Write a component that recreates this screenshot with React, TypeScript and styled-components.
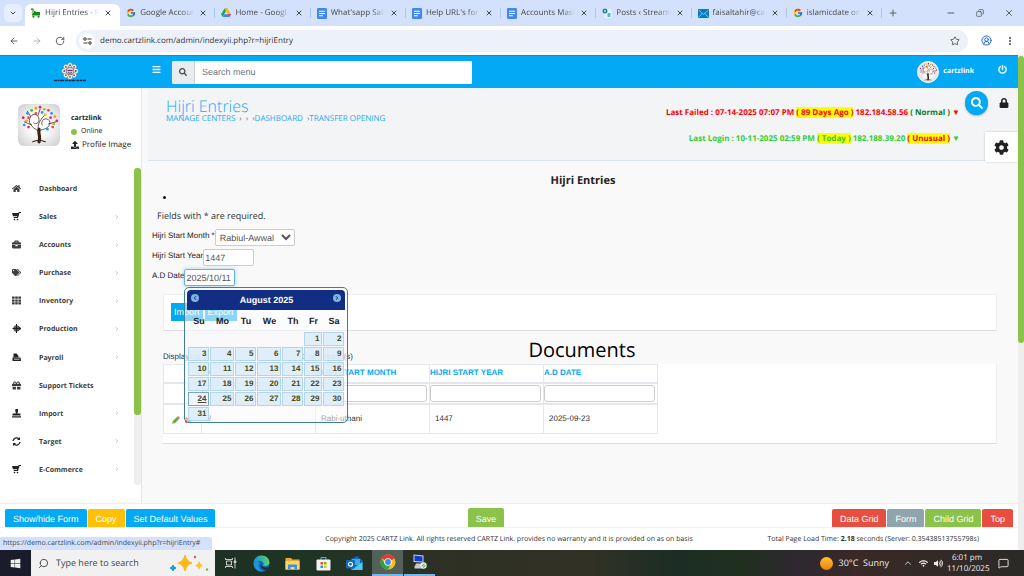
import React from "react";
import styled, { createGlobalStyle, css } from "styled-components";
import {
  FaBars, FaSearch, FaPowerOff, FaHome, FaBriefcase, FaTags, FaTh, FaGift,
  FaLock, FaCog, FaUpload, FaWindows, FaWifi, FaVolumeUp,
} from "react-icons/fa";
import { FcGoogle } from "react-icons/fc";
import {
  ArrowLeft, ArrowRight, RotateCw, Star, CircleUserRound, EllipsisVertical,
  ChevronDown, ChevronRight, ChevronUp, X, Plus, Minus, Copy, Search,
  MessageSquare,
} from "lucide-react";

const sans = '"Open Sans", "Noto Sans", sans-serif';
const arial = '"Liberation Sans", Arial, sans-serif';
const blue = "#03a9f4";
const green = "#8bc34a";

const Global = createGlobalStyle`
  *, *::before, *::after { box-sizing: border-box; }
  html, body { margin: 0; height: 100%; }
  body { font-family: ${sans}; font-size: 8px; line-height: 12px; color: #333; overflow: hidden; text-rendering: geometricPrecision; }
  a { color: inherit; text-decoration: none; }
  button, input, select { font: inherit; margin: 0; text-rendering: inherit; }
  button { border: 0; padding: 0; background: none; color: inherit; }
  h1, h2, h3, p, ul { margin: 0; padding: 0; font-weight: normal; }
  svg { display: block; flex: none; }
`;

const Screen = styled.div`
  height: 100vh;
  display: flex;
  flex-direction: column;
  position: relative;
`;

/* ---------- browser chrome ---------- */

const TabStrip = styled.div`
  flex: none;
  height: 26px;
  display: flex;
  align-items: stretch;
  background: #d3e1fd;
  color: #474747;
`;
const TabMenu = styled.button`
  width: 18px;
  height: 18px;
  margin: 4px 3px 4px 4px;
  border-radius: 5px;
  background: #e7effe;
  display: grid;
  place-items: center;
`;
const Tabs = styled.div`
  flex: 1;
  min-width: 0;
  display: grid;
  grid-template-columns: repeat(9, 1fr);
`;
const Tab = styled.div<{ $active?: boolean }>`
  display: flex;
  align-items: center;
  gap: 4px;
  padding: 0 7px 0 6px;
  min-width: 0;
  margin-top: ${(p) => (p.$active ? 4 : 0)}px;
  padding-bottom: ${(p) => (p.$active ? 4 : 0)}px;
  background: ${(p) => (p.$active ? "#fff" : "none")};
  border-radius: 6px 6px 0 0;
  position: relative;
  &:not(:first-child)::after {
    content: "";
    position: absolute;
    right: 0;
    top: 8px;
    height: 10px;
    width: 1px;
    background: #a8c7fa;
  }
`;
const TabLabel = styled.span`
  flex: 1;
  overflow: hidden;
  white-space: nowrap;
  mask-image: linear-gradient(90deg, #000 75%, transparent 100%);
`;
const TabClose = styled.button`
  width: 10px;
  height: 10px;
  display: grid;
  place-items: center;
`;
const WindowButtons = styled.div`
  flex: none;
  width: 142px;
  display: flex;
  align-items: center;
  justify-content: space-between;
  padding: 0 10px 0 6px;
`;
const WinGroup = styled.div`
  display: flex;
  gap: 20px;
  align-items: center;
`;
const AddressRow = styled.div`
  flex: none;
  height: 29px;
  display: flex;
  align-items: center;
  gap: 13px;
  padding: 0 9px;
  background: #fff;
  color: #474747;
`;
const Address = styled.label`
  flex: 1;
  height: 22px;
  border-radius: 11px;
  background: #ecf1fa;
  display: flex;
  align-items: center;
  padding: 0 8px 0 3px;
  margin-left: -2px;
`;
const SiteInfo = styled.span`
  width: 16px;
  height: 16px;
  border-radius: 8px;
  background: #fff;
  display: grid;
  place-items: center;
`;
const AddressInput = styled.input`
  flex: 1;
  border: 0;
  background: none;
  padding: 0 5px;
  font-size: 8px;
  color: #333;
  outline: 0;
`;

/* ---------- site shell ---------- */

const Viewport = styled.div`
  flex: 1;
  min-height: 0;
  display: flex;
`;
const PageScroll = styled.div`
  flex: none;
  width: 6px;
  background: #eee;
  padding-top: 1px;
  &::before {
    content: "";
    display: block;
    height: 58%;
    border-radius: 3px;
    background: ${green};
  }
`;
const Site = styled.div`
  flex: 1;
  min-width: 0;
  display: flex;
  flex-direction: column;
`;
const Header = styled.header`
  flex: none;
  height: 33px;
  display: flex;
  align-items: center;
  background: ${blue};
  border-top: 1px solid #2b86b5;
  color: #fff;
`;
const Logo = styled.a`
  width: 140px;
  display: flex;
  justify-content: center;
`;
const MenuToggle = styled.button`
  width: 32px;
  padding: 0 0 6px 12px;
`;
const MenuSearch = styled.label`
  width: 300px;
  height: 23px;
  display: flex;
  background: #fff;
  border-radius: 2px;
  overflow: hidden;
  color: #444;
`;
const SearchAddon = styled.span`
  width: 23px;
  background: #e9ecef;
  border-right: 1px solid #ccd2d6;
  display: grid;
  place-items: center;
`;
const MenuSearchInput = styled.input`
  flex: 1;
  border: 0;
  padding: 0 7px;
  font: 9px ${arial};
  &::placeholder { color: #6c757d; opacity: 1; }
`;
const HeaderUser = styled.div`
  margin-left: auto;
  display: flex;
  align-items: center;
  gap: 4px;
  padding-right: 11px;
  font-size: 7px;
  font-weight: 700;
`;
const Avatar = styled.span<{ $size: number; $round?: boolean }>`
  display: block;
  width: ${(p) => p.$size}px;
  height: ${(p) => p.$size}px;
  border-radius: ${(p) => (p.$round ? "50%" : "6px")};
  overflow: hidden;
  background: radial-gradient(#fff 30%, #ccc);
  ${(p) => p.$round && css`border: 1px solid #fff;`}
`;
const Power = styled.button`
  margin: 0 0 6px 20px;
`;
const Body = styled.div`
  flex: 1;
  min-height: 0;
  display: flex;
`;

/* ---------- sidebar ---------- */

const Sidebar = styled.aside`
  flex: none;
  width: 142px;
  display: flex;
  flex-direction: column;
  padding-bottom: 18px;
  border-right: 1px solid #e6e6e6;
  background: #fff;
`;
const Profile = styled.div`
  flex: none;
  height: 80px;
  display: flex;
  gap: 11px;
  padding: 16px 0 0 18px;
`;
const ProfileText = styled.div`
  display: flex;
  flex-direction: column;
  padding-top: 8px;
  line-height: 13px;
  color: #222;
`;
const ProfileLine = styled.span`
  display: flex;
  align-items: center;
  gap: 3px;
  white-space: nowrap;
`;
const Online = styled(ProfileLine)`
  font-size: 7px;
  gap: 4px;
  &::before {
    content: "";
    width: 6px;
    height: 6px;
    border-radius: 3px;
    background: ${green};
  }
`;
const UserName = styled.b`
  font-size: 7px;
`;
const NavArea = styled.div`
  flex: 1;
  min-height: 0;
  display: flex;
`;
const Nav = styled.nav`
  flex: 1;
  padding-top: 8px;
  display: grid;
  grid-auto-rows: 1fr;
`;
const NavItem = styled.a`
  display: grid;
  grid-template-columns: 27px 1fr 8px;
  align-items: center;
  padding: 0 12px;
  font-size: 7px;
  font-weight: 700;
  color: #3d3d3d;
  svg { margin-bottom: 3px; }
`;
const NavScroll = styled.div`
  width: 7px;
  border-radius: 3px;
  background: #eee;
  &::before {
    content: "";
    display: block;
    height: 78%;
    border-radius: 3px;
    background: ${green};
  }
`;

/* ---------- main ---------- */

const Main = styled.main`
  flex: 1;
  min-width: 0;
  background: #f9f9f9;
  overflow: hidden;
`;
const PageHead = styled.div`
  height: 73px;
  margin-left: 6px;
  padding: 9px 0 0 18px;
  display: flex;
  background: #f3f4f6;
  border-bottom: 1px solid #dde6ed;
`;
const HeadTitles = styled.div`
  flex: 1;
`;
const PageTitle = styled.h1`
  font-size: 16px;
  line-height: 18px;
  font-weight: 300;
  color: #27a9f1;
`;
const Crumbs = styled.nav`
  display: flex;
  align-items: center;
  line-height: 8px;
  color: #27a9f1;
`;
const Sep = styled.span`
  color: #777;
  margin-left: 4px;
`;
const Logins = styled.div`
  padding: 10px 5px 0 0;
  display: flex;
  flex-direction: column;
  align-items: flex-end;
  gap: 14px;
  font-size: 8px;
  white-space: nowrap;
`;
const LoginLine = styled.p<{ $color: string }>`
  font-weight: 700;
  color: ${(p) => p.$color};
`;
const Mark = styled.mark<{ $color: string; $plain?: boolean }>`
  color: ${(p) => p.$color};
  background: ${(p) => (p.$plain ? "none" : "#ff0")};
`;
const HeadTools = styled.div`
  width: 53px;
  margin-top: -9px;
  display: flex;
  flex-direction: column;
  align-items: flex-end;
  justify-content: space-between;
`;
const ToolRow = styled.div`
  width: 53px;
  display: flex;
  align-items: center;
  justify-content: space-between;
  padding: 3px 9px 0 0;
`;
const RoundSearch = styled.button`
  width: 23px;
  height: 24px;
  border-radius: 12px;
  background: ${blue};
  color: #fff;
  display: grid;
  place-items: center;
  box-shadow: 0 1px 2px #0004;
`;
const Gear = styled.button`
  width: 33px;
  height: 30px;
  margin-bottom: -2px;
  background: #fff;
  color: #222;
  display: grid;
  place-items: center;
  box-shadow: 0 0 2px #0003;
`;
const Content = styled.div`
  padding: 0 21px;
`;
const FormTitle = styled.h2`
  padding: 13px 0 2px 6px;
  font-size: 11px;
  line-height: 14px;
  font-weight: 700;
  text-align: center;
  color: #222;
`;
const Errors = styled.ul`
  height: 14px;
  display: flex;
  align-items: center;
  &::before {
    content: "";
    width: 3px;
    height: 3px;
    border-radius: 2px;
    background: #111;
  }
`;
const Form = styled.form`
  margin-left: -11px;
  font-family: ${arial};
`;
const Hint = styled.p`
  margin: 4px 0 5px 5px;
  font: 9px/16px ${sans};
`;
const Field = styled.div`
  display: flex;
  align-items: flex-start;
  height: 20px;
  line-height: 14px;
  color: #222;
  &:last-child { height: 25px; }
`;
const fieldBox = css`
  height: 17px;
  border: 1px solid #ccc;
  border-radius: 2px;
  background: #fff;
  color: #555;
  font: 9px ${arial};
  padding: 0 1px;
`;
const Select = styled.select`
  ${fieldBox}
  width: 80px;
  padding: 0;
`;
const Text = styled.input<{ $focus?: boolean }>`
  ${fieldBox}
  width: 51px;
  ${(p) => p.$focus && css`border-color: #66afe9; box-shadow: 0 0 4px #66afe999; outline: 0;`}
`;
const DateWrap = styled.div`
  position: relative;
  line-height: 0;
`;

/* ---------- date picker ---------- */

const Picker = styled.div`
  position: absolute;
  z-index: 2;
  top: 18px;
  left: 0;
  width: 164px;
  height: 136px;
  padding: 2px;
  border: 1px solid #3f7f86;
  border-radius: 5px;
  background: #fafaff8c;
  font-family: ${arial};
`;
const PickerHead = styled.div`
  height: 20px;
  display: flex;
  justify-content: space-between;
  padding: 4px 4px 0;
  border-radius: 4px 4px 0 0;
  background: #112e84;
  color: #fff;
`;
const PickerTitle = styled.strong`
  font-size: 9px;
  line-height: 13px;
`;
const PickerArrow = styled.button<{ $back?: boolean }>`
  width: 8px;
  height: 8px;
  border-radius: 4px;
  background: #7fb5dd;
  color: #112e84;
  display: grid;
  place-items: center;
  transform: ${(p) => (p.$back ? "rotate(180deg)" : "none")};
`;
const Days = styled.table`
  width: 100%;
  border-collapse: separate;
  border-spacing: 1px;
  table-layout: fixed;
  line-height: 11px;
  th { height: 20px; padding: 0; text-align: center; color: #222; font-size: 9px; }
  td { padding: 0; height: 14px; }
`;
const DayCol = styled.col<{ $w: number }>`
  width: ${(p) => p.$w}%;
`;
const Day = styled.button<{ $today?: boolean }>`
  display: block;
  width: 100%;
  height: 14px;
  padding-right: 2px;
  border: 1px solid ${(p) => (p.$today ? "#7ba5cc" : "#b3d5ee")};
  background: ${(p) => (p.$today ? "#eef5fbe6" : "#d9ecf9e0")};
  text-align: right;
  font-weight: 700;
  line-height: 12px;
  color: ${(p) => (p.$today ? "#444" : "#4a4a10")};
  text-decoration: ${(p) => (p.$today ? "underline" : "none")};
`;

/* ---------- grid ---------- */

const Panel = styled.section`
  background: #fff;
  border: 1px solid #eee;
  border-bottom-color: #ddd;
`;
const ImportPanel = styled(Panel)`
  height: 37px;
  padding: 8px 7px;
  display: flex;
  gap: 2px;
`;
const Btn = styled.button<{ $bg?: string }>`
  height: 18px;
  padding: 2px 8px 0;
  border-radius: 2px 2px 0 0;
  background: ${(p) => p.$bg ?? blue};
  color: #fff;
  font: 9px ${arial};
  white-space: nowrap;
`;
const SmallBtn = styled(Btn)`
  padding: 0 3px;
  border-radius: 0;
`;
const GridHead = styled.div`
  height: 33px;
  display: grid;
  grid-template-columns: 1fr auto 1fr;
`;
const Summary = styled.p`
  width: 190px;
  align-self: end;
  margin-bottom: 6px;
  display: flex;
  justify-content: space-between;
  font-family: ${arial};
`;
const GridTitle = styled.h2`
  font-size: 20px;
  line-height: 38px;
  color: #000;
  padding-left: 4px;
`;
const GridPanel = styled(Panel)`
  padding-bottom: 9px;
  border-width: 0 1px 1px 0;
`;
const Data = styled.table`
  width: 495px;
  table-layout: fixed;
  border-collapse: collapse;
  font-family: ${arial};
  th, td { border: 1px solid #e5e8ec; padding: 0; text-align: left; }
  th { height: 18px; color: ${blue}; }
  thead tr { border-bottom: 2px solid #e3e7eb; }
  tbody td { height: 30px; padding-left: 5px; }
`;
const ToolCol = styled.col`
  width: 38px;
`;
const Filter = styled.input`
  display: block;
  width: calc(100% - 2px);
  height: 17px;
  margin: 1px 0;
  border: 1px solid #ccc;
  border-radius: 3px;
`;
const RowTools = styled.span`
  display: flex;
  gap: 4px;
  padding: 4px 0 0 2px;
`;

/* ---------- bottom bars ---------- */

const ActionBar = styled.div`
  flex: none;
  height: 24px;
  display: grid;
  grid-template-columns: 1fr auto 1fr;
  align-items: end;
  padding: 0 5px;
  border-top: 1px solid #eee;
  background: #fff;
`;
const BtnGroup = styled.div<{ $end?: boolean }>`
  display: flex;
  gap: 1px;
  justify-content: ${(p) => (p.$end ? "flex-end" : "flex-start")};
`;
const SaveBtn = styled(Btn)`
  height: 19px;
  margin-right: 46px;
`;
const Footer = styled.footer`
  flex: none;
  height: 23px;
  display: grid;
  grid-template-columns: 1fr auto 1fr;
  padding-top: 6px;
  border-top: 1px solid #f0f0f0;
  background: #fff;
  font-size: 7px;
`;
const Copyright = styled.p`
  grid-column: 2;
`;
const LoadTime = styled.p`
  text-align: right;
  padding-right: 39px;
`;
const LinkBubble = styled.div`
  position: absolute;
  z-index: 3;
  left: 0;
  bottom: 26px;
  height: 13px;
  min-width: 212px;
  padding: 1px 3px 0;
  border-radius: 0 3px 0 0;
  background: #d3e1fd;
  color: #474747;
  font-size: 7px;
  white-space: nowrap;
`;
const Taskbar = styled.div`
  flex: none;
  height: 26px;
  display: flex;
  background: linear-gradient(90deg, #1b2b22 0%, #1f3425 30%, #2f3024 45%, #313124 58%, #1b2d25 66%, #20301f 72%, #2e2830 78%, #3a2926 84%, #2b2a26 100%);
  color: #eee;
`;
const Start = styled.button`
  width: 31px;
  background: #1b1c2b;
  display: grid;
  place-items: center;
`;
const TaskSearch = styled.label`
  width: 184px;
  padding: 0 6px 0 7px;
  display: flex;
  align-items: center;
  gap: 7px;
  background: #f1f1f1;
  color: #444;
`;
const TaskInput = styled.input`
  flex: 1;
  width: 100px;
  border: 0;
  padding: 0;
  background: none;
  font-size: 9px;
  &::placeholder { color: #444; opacity: 1; }
`;
const TaskApp = styled.button<{ $state?: "open" | "active" }>`
  width: 31px;
  display: grid;
  place-items: center;
  margin: ${(p) => (p.$state === "active" ? "0 1px 0 2px" : "0")};
  background: ${(p) => (p.$state === "active" ? "#56605a" : "none")};
  border-bottom: ${(p) => (p.$state ? "2px solid #76b9ed" : "0")};
`;
const Tray = styled.div`
  margin-left: auto;
  display: flex;
  align-items: center;
  gap: 6px;
  padding-right: 15px;
  font-size: 9px;
`;
const Sun = styled.span`
  width: 13px;
  height: 13px;
  border-radius: 7px;
  background: linear-gradient(#fdc52b, #f07b12);
`;
const Weather = styled.span`
  margin-right: 8px;
  white-space: pre;
`;
const Clock = styled.time`
  width: 40px;
  text-align: center;
  font-size: 8px;
  line-height: 11px;
  margin: 0 5px 0 -2px;
`;

/* ---------- drawings ---------- */

const Tree = () => (
  <svg viewBox="0 0 40 40" width="100%" height="100%">
    <g stroke="#3a2016" fill="none" strokeLinecap="round">
      <path d="M20 36C22 31 19 29 20 24" strokeWidth="3" />
      <path d="M20 26C12 22 9 17 12 12C15 8 20 10 20 15C20 18 17 20 15 18M21 25C27 24 32 21 30 16C27 12 21 15 23 20M20 25C17 20 22 14 26 10M13 20L6 17M12 12L9 7M29 19L36 17M19 11L21 5" strokeWidth=".7" />
      <path d="M14 36Q20 33 26 36" strokeWidth="1" />
    </g>
    {[
      [5, 13, "#e91e63"], [9, 9, "#2196f3"], [13, 6, "#4caf50"], [17, 4, "#ff9800"], [21, 3, "#e91e63"],
      [25, 5, "#8bc34a"], [29, 6, "#f44336"], [32, 9, "#2196f3"], [35, 12, "#ff9800"], [37, 16, "#e91e63"],
      [34, 19, "#8bc34a"], [31, 13, "#e91e63"], [26, 10, "#ffc107"], [17, 9, "#f44336"], [8, 16, "#ff9800"],
      [6, 20, "#2196f3"], [23, 8, "#2196f3"], [33, 22, "#f44336"], [10, 13, "#f44336"], [28, 24, "#2196f3"], [10, 22, "#e91e63"],
    ].map(([x, y, c], i) => <circle key={i} cx={x} cy={y} r="1.3" fill={c as string} />)}
  </svg>
);
const LogoMark = () => (
  <svg width="34" height="20" viewBox="0 0 34 20">
    {Array.from({ length: 8 }, (_, i) => (
      <g key={i} transform={`rotate(${i * 45} 17 9)`}>
        <circle cx="17" cy="3.2" r="2.6" fill="#f2faf6" stroke="#2d6660" strokeWidth=".4" />
        <circle cx="17" cy="3.2" r=".9" fill="#8b2d68" />
      </g>
    ))}
    <circle cx="17" cy="9" r="4" fill="#ccc" stroke="#555" strokeWidth=".6" />
    <path d="M14.5 8.5h5M15 10.5q2 1.8 4 0" stroke="#7a2a5a" fill="none" />
    <path d="M1 18.5h32" stroke="#142a55" strokeWidth="1.6" strokeDasharray="3 .6 2 .6 4 1" />
  </svg>
);
const GreenCart = () => (
  <svg width="10" height="10" viewBox="0 0 20 20">
    <path d="M0 1h5v9h13v5H2v-3h1V4H0z" fill="#138a13" />
    <path d="M6 6h3v2h9v2H6z" fill="#138a13" />
    <circle cx="5" cy="17.5" r="2.2" fill="#138a13" /><circle cx="15" cy="17.5" r="2.2" fill="#138a13" />
  </svg>
);
const Drive = () => (
  <svg width="10" height="10" viewBox="0 0 20 18">
    <path d="M7 0h6L6.500 11.500 3.500 17 0 11.500z" fill="#1fa463" />
    <path d="M7 0h6l7 11.500h-6.500z" fill="#ffba00" />
    <path d="M6.500 11.500H20L17 17H3.500z" fill="#4285f4" />
    <path d="M13.500 11.500H20L17 17z" fill="#ea4335" />
  </svg>
);
const Doc = () => (
  <svg width="10" height="11" viewBox="0 0 20 22">
    <rect width="20" height="22" rx="2.500" fill="#4285f4" />
    <path d="M4 6.500h12M4 11h12M4 15.500h8" stroke="#fff" strokeWidth="2" />
  </svg>
);
const Post = () => (
  <svg width="10" height="10" viewBox="0 0 20 20">
    <path d="M3 1h12l5 5v14H5z" fill="#e4f4fa" />
    <circle cx="6" cy="6" r="5" fill="#2382a5" /><circle cx="6" cy="6" r="1.800" fill="#d3e1fd" />
    <path d="M11 10h6v8h-6z" fill="#5ab6d5" />
  </svg>
);
const Mail = () => (
  <svg width="11" height="9" viewBox="0 0 22 18">
    <rect width="22" height="18" fill="#0b78c2" /><path d="M1 2l10 9L21 2M1 17l7-8M21 17l-7-8" stroke="#bfe4ff" fill="none" strokeWidth="1.400" />
  </svg>
);
const Tune = () => (
  <svg width="9" height="8" viewBox="0 0 18 16" stroke="#333" fill="none" strokeWidth="2">
    <circle cx="4" cy="4" r="2.500" /><path d="M9 4h8M1 12h8" /><circle cx="14" cy="12" r="2.500" />
  </svg>
);
const Cart = () => (
  <svg width="9" height="9" viewBox="0 0 18 18" fill="#222">
    <path d="M0 2h12l2-2h4v2h-3l-3 10H4L3 10h7l.5-1.500H2z" /><circle cx="5" cy="15" r="1.700" /><circle cx="11" cy="15" r="1.700" />
  </svg>
);
const Wheel = () => (
  <svg width="9" height="9" viewBox="0 0 18 18" fill="none" stroke="#222" strokeWidth="2">
    <circle cx="9" cy="9" r="5.500" /><path d="M9 0v18M1 9h17M5 6.500h8M5 11.500h8M14 6l4 3-4 3" />
  </svg>
);
const Payslip = () => (
  <svg width="9" height="9" viewBox="0 0 18 18" fill="#222">
    <path d="M3 1h6l4 5v3h4l1 7H1V9h2z" /><path d="M4 10h11M4 13h11" stroke="#fff" />
  </svg>
);
const Stamp = () => (
  <svg width="9" height="9" viewBox="0 0 18 18" fill="#222">
    <path d="M7 0h5v5l-1.500 4H17v4H1V9h6.500V5H6zM0 14.500h18V17H0z" />
  </svg>
);
const Refresh = () => (
  <svg width="9" height="9" viewBox="0 0 18 18" fill="none" stroke="#222" strokeWidth="2.400">
    <path d="M2 8a7 7 0 0 1 12-4M16 10a7 7 0 0 1-12 4" /><path d="M16 0v6h-6zM2 18v-6h6z" fill="#222" stroke="none" />
  </svg>
);
const Pencil = () => (
  <svg width="9" height="9" viewBox="0 0 18 18">
    <path d="M1 17l2-6 4 4z" fill="#e3b98b" /><path d="M3 11L12 2l4 4-9 9z" fill="#5aaa3c" /><path d="M12 2l2-2 4 4-2 2z" fill="#d66" />
  </svg>
);
const Cross = () => (
  <svg width="8" height="8" viewBox="0 0 16 16"><path d="M3 3l10 10M13 3L3 13" stroke="#e0402a" strokeWidth="4" /></svg>
);
const Sparkles = () => (
  <svg width="40" height="18" viewBox="0 0 40 18">
    <path d="M16 1Q17.500 7.500 23 9Q17.500 10.500 16 17Q14.500 10.500 9 9Q14.500 7.500 16 1z" fill="#fbb917" stroke="#fbb917" />
    <path d="M30 7Q31 10.500 34 11.500Q31 12.500 30 15.500Q29 12.500 26 11.500Q29 10.500 30 7z" fill="#fcc435" />
    <path d="M4 11l1 2 2 1-2 1-1 2-1-2-2-1 2-1z" fill="#1698e0" stroke="#1698e0" />
    <circle cx="26" cy="3" r="1.200" fill="#e8502d" /><circle cx="38" cy="15.500" r="1.200" fill="#74b84a" />
  </svg>
);
const Edge = () => (
  <svg width="17" height="17" viewBox="0 0 34 34">
    <defs><linearGradient id="edge"><stop stopColor="#1b8fdb" /><stop offset="1" stopColor="#5ad66a" /></linearGradient></defs>
    <circle cx="17" cy="17" r="16" fill="#1268b8" />
    <path d="M1 17C1 7 9 1 17 1C27 1 33 8 33 15C33 20 28 23 21 22C19 21 22 20 21 16C19 10 8 9 1 17z" fill="url(#edge)" />
    <path d="M33 23C27 27 17 25 16 18C14 25 20 31 27 30Q31 28 33 23z" fill="#20352a" />
    <path d="M12 17C9 25 15 33 24 32C14 35 3 30 1 18Q5 11 13 14z" fill="#2196e0" />
  </svg>
);
const Folder = () => (
  <svg width="15" height="13" viewBox="0 0 30 26">
    <path d="M1 2h11l3 3h14v20H1z" fill="#e8a92c" /><path d="M1 8h28v17H1z" fill="#fcd669" /><path d="M6 25V15h18v10h-5v-5h-8v5z" fill="#3c91d9" />
  </svg>
);
const Store = () => (
  <svg width="15" height="15" viewBox="0 0 30 30">
    <path d="M10 8V3h10v5" fill="none" stroke="#49b5ec" strokeWidth="2" /><rect x="1" y="7" width="28" height="22" rx="2" fill="#f2f2f2" />
    <path d="M9 12h5v5H9z" fill="#f25022" /><path d="M16 12h5v5h-5z" fill="#7fba00" /><path d="M9 19h5v5H9z" fill="#00a4ef" /><path d="M16 19h5v5h-5z" fill="#ffb900" />
  </svg>
);
const Outlook = () => (
  <svg width="17" height="15" viewBox="0 0 34 30">
    <path d="M10 6L22 0l11 9v19H10z" fill="#1066b5" /><path d="M12 6h16v12H12z" fill="#40a8ea" /><path d="M10 28l23-16v16z" fill="#50c8f2" />
    <rect y="8" width="18" height="17" rx="2" fill="#0f6cbd" /><circle cx="9" cy="16.500" r="4" fill="none" stroke="#fff" strokeWidth="2.400" />
  </svg>
);
const Chrome = () => (
  <svg width="16" height="16" viewBox="0 0 32 32">
    <circle cx="16" cy="16" r="15" fill="#fbc116" />
    <path d="M16 16L3 8.500A15 15 0 0 1 29 8.500z" fill="#e33b2e" /><path d="M29 8.500H16V16z" fill="#e33b2e" />
    <path d="M3 8.500L10 20L16 31A15 15 0 0 1 3 8.500z" fill="#2ba24c" /><path d="M9 18l7 5 6-3-6 11z" fill="#2ba24c" />
    <circle cx="16" cy="16" r="7.500" fill="#fff" /><circle cx="16" cy="16" r="5.800" fill="#4285f4" />
  </svg>
);
const Remote = () => (
  <svg width="15" height="16" viewBox="0 0 30 32">
    <path d="M3 1l20 2v14L3 16z" fill="#ccd3e0" /><path d="M5 3l16 2v10L5 14z" fill="#1238d0" /><path d="M8 19h11l3 5H6zM5 24h18v5H5z" fill="#c4c9d2" />
    <circle cx="23" cy="23" r="6.500" fill="#dfe8dc" /><path d="M20 24l5-4M22 27l5-4" stroke="#3b9b42" strokeWidth="2" />
  </svg>
);
const TaskView = () => (
  <svg width="12" height="12" viewBox="0 0 24 24" fill="none" stroke="#ddd" strokeWidth="1.800">
    <path d="M1 2v3h14V2M3 8h10v8H3zM1 22v-3h14v3M20 1v22M18 8h4v3h-4z" />
  </svg>
);

/* ---------- data ---------- */

const tabs: [React.ReactNode, string][] = [
  [<GreenCart />, "Hijri Entries - P"], [<FcGoogle size={10} />, "Google Accour"], [<Drive />, "Home - Googl"],
  [<Doc />, "What'sapp Sale"], [<Doc />, "Help URL's for"], [<Doc />, "Accounts Mast"],
  [<Post />, "Posts ‹ Streaml"], [<Mail />, "faisaltahir@ca"], [<FcGoogle size={10} />, "islamicdate on"],
];
const nav: [React.ReactNode, string, boolean][] = [
  [<FaHome size={9} />, "Dashboard", false], [<Cart />, "Sales", true], [<FaBriefcase size={9} />, "Accounts", true],
  [<FaTags size={9} />, "Purchase", true], [<FaTh size={9} />, "Inventory", true], [<Wheel />, "Production", true],
  [<Payslip />, "Payroll", true], [<FaGift size={9} />, "Support Tickets", false], [<Stamp />, "Import", true],
  [<Refresh />, "Target", true], [<Cart />, "E-Commerce", true],
];
const dayColumns = [14, 16, 14, 16, 14, 12, 14];
const weeks = [0, 1, 2, 3, 4, 5].map((w) => [0, 1, 2, 3, 4, 5, 6].map((d) => w * 7 + d - 4));

export default function App() {
  return (
    <Screen>
      <Global />
      <TabStrip>
        <TabMenu aria-label="Search tabs"><ChevronDown size={8} strokeWidth={3} /></TabMenu>
        <Tabs>
          {tabs.map(([icon, label], i) => (
            <Tab key={label} $active={i === 0}>
              {icon}
              <TabLabel>{label}</TabLabel>
              <TabClose aria-label="Close tab"><X size={8} strokeWidth={3} /></TabClose>
            </Tab>
          ))}
        </Tabs>
        <WindowButtons>
          <button aria-label="New tab"><Plus size={10} /></button>
          <WinGroup>
            <button aria-label="Minimize"><Minus size={10} /></button>
            <button aria-label="Restore"><Copy size={8} style={{ transform: "scaleX(-1)" }} /></button>
            <button aria-label="Close window"><X size={10} /></button>
          </WinGroup>
        </WindowButtons>
      </TabStrip>
      <AddressRow>
        <button aria-label="Back"><ArrowLeft size={10} /></button>
        <button aria-label="Forward"><ArrowRight size={10} color="#aaa" /></button>
        <button aria-label="Reload"><RotateCw size={10} /></button>
        <Address>
          <SiteInfo><Tune /></SiteInfo>
          <AddressInput aria-label="Address" defaultValue="demo.cartzlink.com/admin/indexyii.php?r=hijriEntry" />
          <Star size={10} />
        </Address>
        <CircleUserRound size={11} color="#1a5fd0" />
        <EllipsisVertical size={10} strokeWidth={3} />
      </AddressRow>

      <Viewport>
        <Site>
          <Header>
            <Logo href="#" aria-label="Home"><LogoMark /></Logo>
            <MenuToggle aria-label="Toggle menu"><FaBars size={9} /></MenuToggle>
            <MenuSearch>
              <SearchAddon><FaSearch size={8} /></SearchAddon>
              <MenuSearchInput placeholder="Search menu" />
            </MenuSearch>
            <HeaderUser>
              <Avatar $size={22} $round><Tree /></Avatar>
              cartzlink
              <Power aria-label="Log out"><FaPowerOff size={9} /></Power>
            </HeaderUser>
          </Header>

          <Body>
            <Sidebar>
              <Profile>
                <Avatar $size={42}><Tree /></Avatar>
                <ProfileText>
                  <UserName>cartzlink</UserName>
                  <Online>Online</Online>
                  <ProfileLine><FaUpload size={8} /> Profile Image</ProfileLine>
                </ProfileText>
              </Profile>
              <NavArea>
                <Nav>
                  {nav.map(([icon, label, more]) => (
                    <NavItem href="#" key={label}>
                      {icon}
                      {label}
                      {more && <ChevronRight size={6} color="#888" />}
                    </NavItem>
                  ))}
                </Nav>
                <NavScroll />
              </NavArea>
            </Sidebar>

            <Main>
              <PageHead>
                <HeadTitles>
                  <PageTitle>Hijri Entries</PageTitle>
                  <Crumbs>
                    <a href="#">MANAGE CENTERS</a><Sep>›</Sep><Sep>›</Sep><Sep>›</Sep>
                    <a href="#">DASHBOARD</a><Sep>›</Sep><a href="#">TRANSFER OPENING</a>
                  </Crumbs>
                </HeadTitles>
                <Logins>
                  <LoginLine $color="#f00">
                    Last Failed : 07-14-2025 07:07 PM <Mark $color="#f00">( 89 Days Ago )</Mark> 182.184.58.56 <Mark $color="#0a7a1e" $plain>( Normal )</Mark> ▼
                  </LoginLine>
                  <LoginLine $color="#32cd32">
                    Last Login : 10-11-2025 02:59 PM <Mark $color="#32cd32">( Today )</Mark> 182.188.39.20 <Mark $color="#f00">( Unusual )</Mark> ▼
                  </LoginLine>
                </Logins>
                <HeadTools>
                  <ToolRow>
                    <RoundSearch aria-label="Search"><FaSearch size={12} /></RoundSearch>
                    <FaLock size={10} color="#222" />
                  </ToolRow>
                  <Gear aria-label="Settings"><FaCog size={15} /></Gear>
                </HeadTools>
              </PageHead>

              <Content>
                <FormTitle>Hijri Entries</FormTitle>
                <Errors />
                <Form>
                  <Hint>Fields with * are required.</Hint>
                  <Field>
                    <label htmlFor="month">Hijri Start Month *</label>
                    <Select id="month"><option>Rabiul-Awwal</option></Select>
                  </Field>
                  <Field>
                    <label htmlFor="year">Hijri Start Year</label>
                    <Text id="year" defaultValue="1447" />
                  </Field>
                  <Field>
                    <label htmlFor="date">A.D Date</label>
                    <DateWrap>
                      <Text id="date" $focus defaultValue="2025/10/11" />
                      <Picker>
                        <PickerHead>
                          <PickerArrow type="button" $back aria-label="Previous month"><ChevronRight size={6} strokeWidth={4} /></PickerArrow>
                          <PickerTitle>August 2025</PickerTitle>
                          <PickerArrow type="button" aria-label="Next month"><ChevronRight size={6} strokeWidth={4} /></PickerArrow>
                        </PickerHead>
                        <Days>
                          <colgroup>{dayColumns.map((w, i) => <DayCol key={i} $w={w} />)}</colgroup>
                          <thead>
                            <tr>{["Su", "Mo", "Tu", "We", "Th", "Fr", "Sa"].map((d) => <th key={d}>{d}</th>)}</tr>
                          </thead>
                          <tbody>
                            {weeks.map((week, w) => (
                              <tr key={w}>
                                {week.map((d) => (
                                  <td key={d}>{d > 0 && d < 32 && <Day type="button" $today={d === 24}>{d}</Day>}</td>
                                ))}
                              </tr>
                            ))}
                          </tbody>
                        </Days>
                      </Picker>
                    </DateWrap>
                  </Field>
                </Form>

                <ImportPanel>
                  <SmallBtn>Import</SmallBtn>
                  <SmallBtn>Export</SmallBtn>
                </ImportPanel>

                <GridHead>
                  <Summary><span>Displaying 1</span><span>- 1 of 1 result(s)</span></Summary>
                  <GridTitle>Documents</GridTitle>
                </GridHead>
                <GridPanel>
                  <Data>
                    <colgroup><ToolCol /><col /><col /><col /><col /></colgroup>
                    <thead>
                      <tr><th /><th>ID</th><th>HIJRI START MONTH</th><th>HIJRI START YEAR</th><th>A.D DATE</th></tr>
                      <tr>
                        <td />
                        {["ID", "Month", "Year", "Date"].map((n) => <td key={n}><Filter aria-label={`Filter ${n}`} /></td>)}
                      </tr>
                    </thead>
                    <tbody>
                      <tr>
                        <td><RowTools><Pencil /><Cross /></RowTools></td>
                        <td>2</td><td>Rabi-uthani</td><td>1447</td><td>2025-09-23</td>
                      </tr>
                    </tbody>
                  </Data>
                </GridPanel>
              </Content>
            </Main>
          </Body>

          <ActionBar>
            <BtnGroup>
              <Btn>Show/hide Form</Btn>
              <Btn $bg="#ffc107">Copy</Btn>
              <Btn>Set Default Values</Btn>
            </BtnGroup>
            <SaveBtn $bg={green}>Save</SaveBtn>
            <BtnGroup $end>
              <Btn $bg="#e84e40">Data Grid</Btn>
              <Btn $bg="#90a4ae">Form</Btn>
              <Btn $bg={green}>Child Grid</Btn>
              <Btn $bg="#e84e40">Top</Btn>
            </BtnGroup>
          </ActionBar>
          <Footer>
            <Copyright>Copyright 2025 CARTZ Link. All rights reserved CARTZ Link. provides no warranty and it is provided on as on basis</Copyright>
            <LoadTime>Total Page Load Time: <b>2.18</b> seconds (Server: 0.35438513755798s)</LoadTime>
          </Footer>
        </Site>
        <PageScroll />
      </Viewport>

      <LinkBubble>https://demo.cartzlink.com/admin/indexyii.php?r=hijriEntry#</LinkBubble>
      <Taskbar>
        <Start aria-label="Start"><FaWindows size={11} /></Start>
        <TaskSearch>
          <Search size={11} style={{ transform: "scaleX(-1)" }} />
          <TaskInput placeholder="Type here to search" />
          <Sparkles />
        </TaskSearch>
        <TaskApp aria-label="Task view"><TaskView /></TaskApp>
        <TaskApp aria-label="Edge"><Edge /></TaskApp>
        <TaskApp aria-label="Files"><Folder /></TaskApp>
        <TaskApp aria-label="Store"><Store /></TaskApp>
        <TaskApp aria-label="Outlook"><Outlook /></TaskApp>
        <TaskApp aria-label="Chrome" $state="active"><Chrome /></TaskApp>
        <TaskApp aria-label="Remote desktop" $state="open"><Remote /></TaskApp>
        <Tray>
          <Sun />
          <Weather>30°C  Sunny</Weather>
          <ChevronUp size={10} />
          <FaWifi size={9} />
          <FaVolumeUp size={9} />
          <Clock>6:01 pm<br />11/10/2025</Clock>
          <MessageSquare size={11} />
        </Tray>
      </Taskbar>
    </Screen>
  );
}
